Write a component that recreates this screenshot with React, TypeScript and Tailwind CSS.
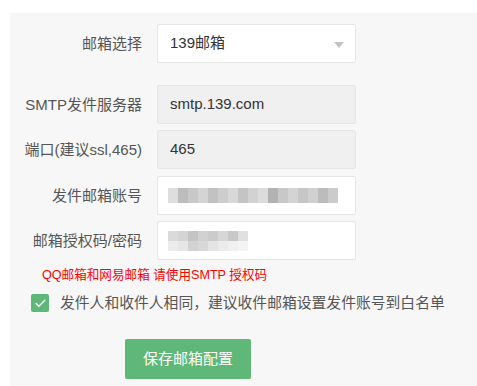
import { Check } from "lucide-react";

const font = "font-['Liberation_Sans','Noto_Sans_CJK_SC',sans-serif]";

// pixelated mask used in the screenshot to hide the account values
const accountBlocks = [
  "#dedede", "#bdbdbd", "#c9c9c9", "#d4d4d4", "#c2c2c2", "#cdcdcd", "#d8d8d8", "#c4c4c4",
  "#d2d2d2", "#dcdcdc", "#b2b2b2", "#c8c8c8", "#d4d4d4", "#c6c6c6", "#d0d0d0", "#bcbcbc", "#cbcbcb",
];
const pwdTop = ["#dadada", "#d4d4d4", "#c4c4c4", "#d1d1d1", "#cbcbcb", "#d7d7d7", "#c8c8c8", "#e0e0e0"];
const pwdBottom = ["#ececec", "#e6e6e6", "#d2d2d2", "#d8d8d8", "#e4e4e4", "#ebebeb", "#f0f0f0", "#f4f4f4"];

function Row({ label, children, className = "" }: { label: string; children: React.ReactNode; className?: string }) {
  return (
    <div className={`flex items-center h-[39px] ${className}`}>
      <label className="w-[147px] pr-[15px] text-right text-[15px] leading-[20px] text-[#555] whitespace-nowrap">
        {label}
      </label>
      {children}
    </div>
  );
}

export default function App() {
  return (
    <div className={`w-[477px] h-[386px] bg-white pt-[13px] pl-[10px] overflow-hidden ${font}`}>
      <div className="h-[373px] bg-[#f7f7f7] pt-[11px]">
        <Row label="邮箱选择">
          <div className="relative w-[199px] h-[39px] bg-white border border-[#e6e6e6] rounded-[2px] flex items-center pl-[12px] text-[15px] text-[#333]">
            139邮箱
            <span className="absolute right-[11px] top-[17px] w-0 h-0 border-l-[5px] border-r-[5px] border-t-[6px] border-l-transparent border-r-transparent border-t-[#c2c2c2]" />
          </div>
        </Row>

        <Row label="SMTP发件服务器" className="mt-[22px]">
          <div className="w-[199px] h-[39px] bg-[#f0f0f0] border border-[#e6e6e6] rounded-[2px] flex items-center pl-[12px] text-[15px] text-[#333]">
            smtp.139.com
          </div>
        </Row>

        <Row label="端口(建议ssl,465)" className="mt-[6px]">
          <div className="w-[199px] h-[39px] bg-[#f0f0f0] border border-[#e6e6e6] rounded-[2px] flex items-center pl-[12px] text-[15px] text-[#333]">
            465
          </div>
        </Row>

        <Row label="发件邮箱账号" className="mt-[7px]">
          <div className="w-[199px] h-[39px] bg-white border border-[#e6e6e6] rounded-[2px] flex items-center pl-[10px]">
            <div className="flex blur-[0.6px]">
              {accountBlocks.map((c, i) => (
                <span key={i} className="w-[10px] h-[15px]" style={{ backgroundColor: c }} />
              ))}
            </div>
          </div>
        </Row>

        <Row label="邮箱授权码/密码" className="mt-[6px]">
          <div className="w-[199px] h-[39px] bg-white border border-[#e6e6e6] rounded-[2px] flex items-center pl-[10px]">
            <div className="flex flex-col blur-[0.6px]">
              <div className="flex">
                {pwdTop.map((c, i) => (
                  <span key={i} className="w-[10px] h-[10px]" style={{ backgroundColor: c }} />
                ))}
              </div>
              <div className="flex">
                {pwdBottom.map((c, i) => (
                  <span key={i} className="w-[10px] h-[10px]" style={{ backgroundColor: c }} />
                ))}
              </div>
            </div>
          </div>
        </Row>

        <p className="mt-[7px] pl-[32px] text-[12.6px] leading-[16px] text-[#ff0000]">
          QQ邮箱和网易邮箱 请使用SMTP 授权码
        </p>

        <div className="mt-[10px] pl-[21px] flex items-center gap-[11px]">
          <span className="w-[18px] h-[18px] rounded-[2px] bg-[#5fb878] flex items-center justify-center">
            <Check className="w-[13px] h-[13px] text-white" strokeWidth={2.5} />
          </span>
          <span className="text-[14.8px] leading-[20px] text-[#555]">
            发件人和收件人相同，建议收件邮箱设置发件账号到白名单
          </span>
        </div>

        <button className="mt-[26px] ml-[115px] w-[126px] h-[40px] rounded-[2px] bg-[#5fb878] text-white text-[15px]">
          保存邮箱配置
        </button>
      </div>
    </div>
  );
}
